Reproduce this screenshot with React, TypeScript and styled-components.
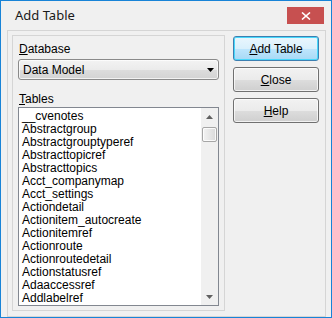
import React from "react";
import styled, { createGlobalStyle } from "styled-components";

const GlobalStyle = createGlobalStyle`
    html, body {
        margin: 0;
        padding: 0;
        background: #f0f0f0;
    }
    * {
        box-sizing: border-box;
    }
`;

const Window = styled.div`
    width: 332px;
    height: 318px;
    border: 1px solid #1883d7;
    background-color: #f0f0f0;
    display: flex;
    flex-direction: column;
    font-family: "Liberation Sans", Arial, sans-serif;
    font-size: 12px;
    color: #000;
`;

const TitleBar = styled.div`
    height: 29px;
    flex-shrink: 0;
    display: flex;
    align-items: flex-start;
    padding-left: 14px;
    background-color: #f0f0f0;
`;

const Title = styled.div`
    font-family: "Noto Sans", "Open Sans", sans-serif;
    font-size: 13px;
    line-height: 17px;
    margin-top: 6px;
    color: #1a1a1a;
`;

const CloseButton = styled.div`
    margin-left: auto;
    margin-right: 7px;
    margin-top: 6px;
    width: 37px;
    height: 17px;
    background-color: #c75050;
    display: flex;
    align-items: center;
    justify-content: center;
`;

const Client = styled.div`
    flex: 1;
    display: flex;
    padding: 0 5px 6px 6px;
`;

const GroupFrame = styled.div`
    flex: 1;
    display: flex;
    border: 1px solid #d5d5d5;
    padding: 4px 6px 5px 4px;
`;

const Panel = styled.div`
    width: 213px;
    flex-shrink: 0;
    border: 1px solid #d5d5d5;
    display: flex;
    flex-direction: column;
    padding: 7px 5px 4px 5px;
`;

const Label = styled.div<{ $gap?: number }>`
    height: 13px;
    line-height: 13px;
    margin-top: ${(p) => p.$gap ?? 0}px;
    padding-left: 1px;
`;

const Mnemonic = styled.span`
    text-decoration: underline;
    text-underline-offset: 1px;
`;

const Select = styled.div`
    margin-top: 3px;
    height: 21px;
    border: 1px solid #8a8a8a;
    border-radius: 3px;
    background: linear-gradient(#f3f3f3 0%, #ebebeb 50%, #dddddd 51%, #d3d3d3 100%);
    box-shadow: inset 0 0 0 1px rgba(255, 255, 255, 0.7);
    display: flex;
    align-items: center;
    padding: 0 4px 0 4px;
`;

const SelectText = styled.span`
    flex: 1;
`;

const ListBox = styled.div`
    margin-top: 1px;
    flex: 1;
    min-height: 0;
    border: 1px solid #828790;
    background: #fff;
    display: flex;
    overflow: hidden;
`;

const Items = styled.div`
    flex: 1;
    overflow: hidden;
    padding: 2px 0 0 3px;
`;

const Item = styled.div`
    height: 13px;
    line-height: 13px;
    white-space: nowrap;
`;

const ScrollBar = styled.div`
    width: 17px;
    flex-shrink: 0;
    background: #f0f0f0;
    display: flex;
    flex-direction: column;
`;

const ScrollArrow = styled.div`
    height: 17px;
    flex-shrink: 0;
    display: flex;
    align-items: center;
    justify-content: center;
`;

const Track = styled.div`
    flex: 1;
    padding: 2px 1px 0 1px;
`;

const Thumb = styled.div`
    height: 15px;
    border: 1px solid #a6a6a6;
    border-radius: 2px;
    background: linear-gradient(90deg, #f3f3f3, #e4e4e4 60%, #dadada);
    box-shadow: inset 0 0 0 1px rgba(255, 255, 255, 0.8);
`;

const ButtonColumn = styled.div`
    width: 86px;
    margin-left: 8px;
    padding-top: 1px;
    display: flex;
    flex-direction: column;
    gap: 6px;
`;

const Button = styled.div<{ $default?: boolean }>`
    height: 25px;
    border: 1px solid ${(p) => (p.$default ? "#3c7fb1" : "#707070")};
    border-radius: 3px;
    background: ${(p) =>
        p.$default
            ? "linear-gradient(#eaf6fd 0%, #d9f0fc 50%, #bee6fd 51%, #a7d9f5 100%)"
            : "linear-gradient(#f2f2f2 0%, #ebebeb 50%, #dddddd 51%, #cfcfcf 100%)"};
    box-shadow: inset 0 0 0 1px ${(p) => (p.$default ? "#48d8fb" : "rgba(255, 255, 255, 0.7)")};
    display: flex;
    align-items: center;
    justify-content: center;
`;

const tables = [
    "__cvenotes",
    "Abstractgroup",
    "Abstractgrouptyperef",
    "Abstracttopicref",
    "Abstracttopics",
    "Acct_companymap",
    "Acct_settings",
    "Actiondetail",
    "Actionitem_autocreate",
    "Actionitemref",
    "Actionroute",
    "Actionroutedetail",
    "Actionstatusref",
    "Adaaccessref",
    "Addlabelref",
];

const Triangle = ({ up, color, w = 7 }: { up?: boolean; color: string; w?: number }) => (
    <svg width={w} height={4} viewBox={`0 0 ${w} 4`}>
        <polygon points={up ? `0,4 ${w},4 ${w / 2},0` : `0,0 ${w},0 ${w / 2},4`} fill={color} />
    </svg>
);

const App = () => {
    return (
        <>
            <GlobalStyle />
            <Window>
                <TitleBar>
                    <Title>Add Table</Title>
                    <CloseButton>
                        <svg width="10" height="8" viewBox="0 0 10 8">
                            <path d="M1 0.5 L9 7.5 M9 0.5 L1 7.5" stroke="#fff" strokeWidth="1.6" />
                        </svg>
                    </CloseButton>
                </TitleBar>
                <Client>
                    <GroupFrame>
                        <Panel>
                            <Label>
                                <Mnemonic>D</Mnemonic>atabase
                            </Label>
                            <Select>
                                <SelectText>Data Model</SelectText>
                                <Triangle color="#000" />
                            </Select>
                            <Label $gap={13}>
                                <Mnemonic>T</Mnemonic>ables
                            </Label>
                            <ListBox>
                                <Items>
                                    {tables.map((t) => (
                                        <Item key={t}>{t}</Item>
                                    ))}
                                </Items>
                                <ScrollBar>
                                    <ScrollArrow>
                                        <Triangle up color="#606060" />
                                    </ScrollArrow>
                                    <Track>
                                        <Thumb />
                                    </Track>
                                    <ScrollArrow>
                                        <Triangle color="#606060" />
                                    </ScrollArrow>
                                </ScrollBar>
                            </ListBox>
                        </Panel>
                        <ButtonColumn>
                            <Button $default>
                                <span>
                                    <Mnemonic>A</Mnemonic>dd Table
                                </span>
                            </Button>
                            <Button>
                                <span>
                                    <Mnemonic>C</Mnemonic>lose
                                </span>
                            </Button>
                            <Button>
                                <span>
                                    <Mnemonic>H</Mnemonic>elp
                                </span>
                            </Button>
                        </ButtonColumn>
                    </GroupFrame>
                </Client>
            </Window>
        </>
    );
};

export default App;
